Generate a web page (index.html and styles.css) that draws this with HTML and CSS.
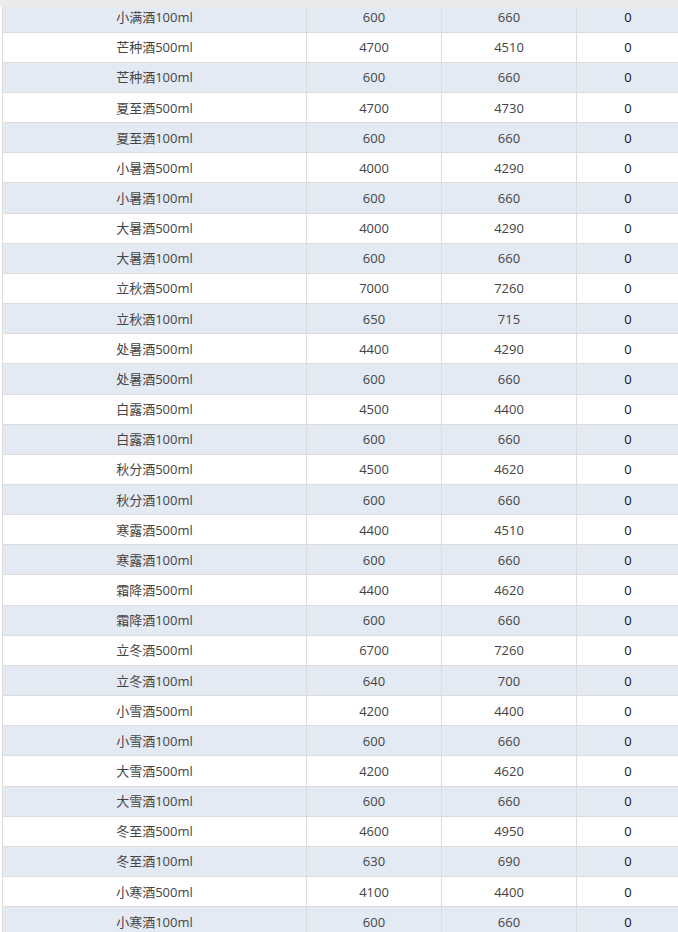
FILE: index.html
```html
<!DOCTYPE html>
<html lang="zh-CN">
<head>
<meta charset="utf-8">
<title>价格表</title>
<link rel="stylesheet" href="styles.css">
</head>
<body>
<div class="topbar"></div>
<div class="viewport">
<table class="grid">
<colgroup><col class="c1"><col class="c2"><col class="c3"><col class="c4"></colgroup>
<tbody>
<tr><td>小满酒100ml</td><td>600</td><td>660</td><td class="z">0</td></tr>
<tr><td>芒种酒500ml</td><td>4700</td><td>4510</td><td class="z">0</td></tr>
<tr><td>芒种酒100ml</td><td>600</td><td>660</td><td class="z">0</td></tr>
<tr><td>夏至酒500ml</td><td>4700</td><td>4730</td><td class="z">0</td></tr>
<tr><td>夏至酒100ml</td><td>600</td><td>660</td><td class="z">0</td></tr>
<tr><td>小暑酒500ml</td><td>4000</td><td>4290</td><td class="z">0</td></tr>
<tr><td>小暑酒100ml</td><td>600</td><td>660</td><td class="z">0</td></tr>
<tr><td>大暑酒500ml</td><td>4000</td><td>4290</td><td class="z">0</td></tr>
<tr><td>大暑酒100ml</td><td>600</td><td>660</td><td class="z">0</td></tr>
<tr><td>立秋酒500ml</td><td>7000</td><td>7260</td><td class="z">0</td></tr>
<tr><td>立秋酒100ml</td><td>650</td><td>715</td><td class="z">0</td></tr>
<tr><td>处暑酒500ml</td><td>4400</td><td>4290</td><td class="z">0</td></tr>
<tr><td>处暑酒500ml</td><td>600</td><td>660</td><td class="z">0</td></tr>
<tr><td>白露酒500ml</td><td>4500</td><td>4400</td><td class="z">0</td></tr>
<tr><td>白露酒100ml</td><td>600</td><td>660</td><td class="z">0</td></tr>
<tr><td>秋分酒500ml</td><td>4500</td><td>4620</td><td class="z">0</td></tr>
<tr><td>秋分酒100ml</td><td>600</td><td>660</td><td class="z">0</td></tr>
<tr><td>寒露酒500ml</td><td>4400</td><td>4510</td><td class="z">0</td></tr>
<tr><td>寒露酒100ml</td><td>600</td><td>660</td><td class="z">0</td></tr>
<tr><td>霜降酒500ml</td><td>4400</td><td>4620</td><td class="z">0</td></tr>
<tr><td>霜降酒100ml</td><td>600</td><td>660</td><td class="z">0</td></tr>
<tr><td>立冬酒500ml</td><td>6700</td><td>7260</td><td class="z">0</td></tr>
<tr><td>立冬酒100ml</td><td>640</td><td>700</td><td class="z">0</td></tr>
<tr><td>小雪酒500ml</td><td>4200</td><td>4400</td><td class="z">0</td></tr>
<tr><td>小雪酒100ml</td><td>600</td><td>660</td><td class="z">0</td></tr>
<tr><td>大雪酒500ml</td><td>4200</td><td>4620</td><td class="z">0</td></tr>
<tr><td>大雪酒100ml</td><td>600</td><td>660</td><td class="z">0</td></tr>
<tr><td>冬至酒500ml</td><td>4600</td><td>4950</td><td class="z">0</td></tr>
<tr><td>冬至酒100ml</td><td>630</td><td>690</td><td class="z">0</td></tr>
<tr><td>小寒酒500ml</td><td>4100</td><td>4400</td><td class="z">0</td></tr>
<tr><td>小寒酒100ml</td><td>600</td><td>660</td><td class="z">0</td></tr>
</tbody>
</table>
</div>
</body>
</html>
```

FILE: styles.css
```css
html, body {
  margin: 0;
  padding: 0;
  background: #ffffff;
  overflow: hidden;
}
body {
  font-family: "Open Sans", "Noto Sans CJK SC", sans-serif;
  font-size: 13px;
  color: #444444;
}
.topbar {
  height: 7px;
  background: #ebebeb;
}
.viewport {
  height: 925px;
  overflow: hidden;
  padding-left: 2px;
}
.grid {
  margin-top: -4.5px;
  table-layout: fixed;
  border-collapse: separate;
  border-spacing: 0;
  width: 677px;
}
.c1 { width: 304px; }
.c2 { width: 135px; }
.c3 { width: 135px; }
.c4 { width: 103px; }
.grid td {
  box-sizing: border-box;
  height: 30.1667px;
  padding: 0;
  text-align: center;
  vertical-align: middle;
  border-left: 1px solid #dcdcdc;
  border-bottom: 1px solid #dcdcdc;
  line-height: 16px;
  white-space: nowrap;
}
.grid tr:nth-child(odd) td {
  background: #e4eaf4;
}
.grid td.z {
  color: #111111;
}
```
